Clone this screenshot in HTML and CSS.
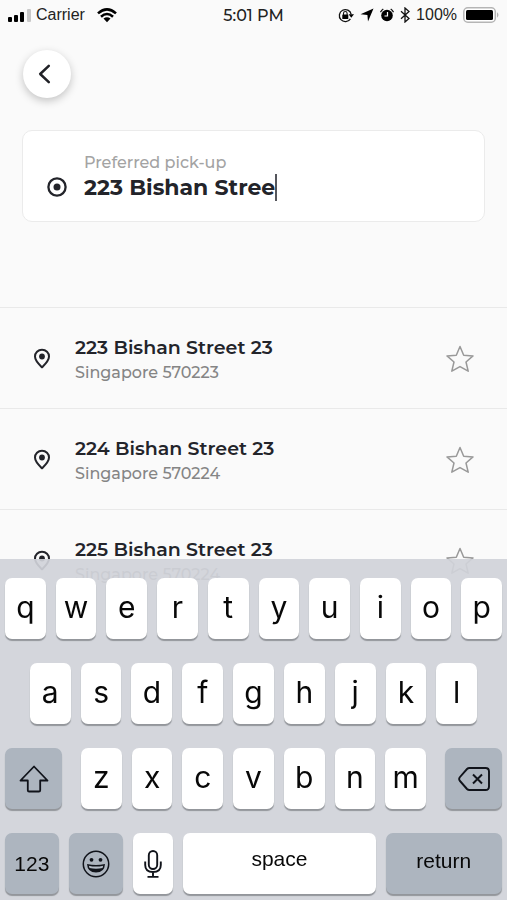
FILE: index.html
```html
<!DOCTYPE html>
<html lang="en">
<head>
<meta charset="utf-8">
<meta name="viewport" content="width=device-width, initial-scale=1">
<title>Preferred pick-up</title>
<link rel="stylesheet" href="styles.css">
</head>
<body>
<svg class="defs" aria-hidden="true">
  <symbol id="pin" viewBox="0 0 18 22">
    <path d="M9 1.800c-4 0-7 3-7 6.800 0 4.200 3.700 7.600 7 10.800 3.300-3.200 7-6.600 7-10.800 0-3.800-3-6.800-7-6.800z" fill="none" stroke="currentColor" stroke-width="2" stroke-linejoin="round"/>
    <circle cx="9" cy="8.500" r="2.900" fill="currentColor"/>
  </symbol>
  <symbol id="star" viewBox="0 0 28 28">
    <path d="M14 1.500 17.700 10.200 27 10.900 20 17 22.200 26.200 14 21.600 5.800 26.200 8 17 1 10.900 10.300 10.200Z" fill="none" stroke="currentColor" stroke-width="1.500" stroke-linejoin="round"/>
  </symbol>
</svg>
<div class="screen">
  <header class="status">
    <div class="status-side">
      <svg width="23" height="14" viewBox="0 0 23 14" aria-hidden="true">
        <rect x="0" y="9" width="4" height="5" rx="1"/><rect x="6" y="7" width="4" height="7" rx="1"/><rect x="12" y="4" width="4" height="10" rx="1"/><rect x="19" y="1" width="4" height="13" rx="1" fill="#c8c8c8"/>
      </svg>
      <span class="carrier">Carrier</span>
      <svg class="wifi" width="20" height="15" viewBox="0 0 20 15" aria-hidden="true">
        <g fill="none" stroke="#000" stroke-width="2.600"><path d="M1 5.400Q10-2.600 19 5.400"/><path d="M4 8.700Q10 3.300 16 8.700"/></g>
        <path d="M6.500 10.600Q10 7.800 13.500 10.600L10 14.200Z"/>
      </svg>
    </div>
    <time class="clock">5:01 PM</time>
    <div class="status-side status-end">
      <svg width="16" height="15" viewBox="0 0 16 15" aria-hidden="true">
        <path d="M12.400 10.800A6 6 0 1 1 13.200 6.300" fill="none" stroke="#111" stroke-width="1.300"/>
        <path d="M10.600 6.300H16L13.300 9.700Z"/><rect x="4.300" y="6.500" width="6" height="4.500" rx=".6"/>
        <path d="M5.500 7V5.300a1.800 1.800 0 0 1 3.600 0V7" fill="none" stroke="#111" stroke-width="1.100"/>
      </svg>
      <svg width="14" height="14" viewBox="0 0 14 14" aria-hidden="true"><path d="M13.500.5 8 13.500 7.400 6.900.5 6.300Z"/></svg>
      <svg width="14" height="14" viewBox="0 0 14 14" aria-hidden="true">
        <circle cx="7" cy="7.500" r="5.800"/><path d="M.5 4.200A7 7 0 0 1 3.300 1M10.700 1A7 7 0 0 1 13.500 4.200" fill="none" stroke="#111" stroke-width="1.300"/>
        <path d="M7.500 4V8H4.500" fill="none" stroke="#fff" stroke-width="1.200"/>
      </svg>
      <svg width="10" height="16" viewBox="0 0 10 16" aria-hidden="true"><path d="M1 4.300 9 11.500 5 15V1L9 4.500 1 11.700" fill="none" stroke="#111" stroke-width="1.300"/></svg>
      <span>100%</span>
      <svg width="36" height="16" viewBox="0 0 36 16" aria-hidden="true">
        <rect x=".8" y=".8" width="31.500" height="14.400" rx="4" fill="#fff" stroke="#b5b5b5" stroke-width="1.500"/>
        <rect x="3" y="3" width="27" height="10" rx="1.500"/><path d="M34 5.300Q37 8 34 10.700Z" fill="#b5b5b5"/>
      </svg>
    </div>
  </header>

  <main>
    <button class="back" type="button" aria-label="Back">
      <svg width="14" height="20" viewBox="0 0 14 20" aria-hidden="true"><path d="M10.800 1.800 2.200 10 10.800 18.200" fill="none" stroke="#202126" stroke-width="2.500" stroke-linecap="round" stroke-linejoin="round"/></svg>
    </button>

    <div class="search">
      <svg width="20" height="20" viewBox="0 0 20 20" aria-hidden="true"><circle cx="10" cy="10" r="8.600" fill="none" stroke="#23242a" stroke-width="2.300"/><circle cx="10" cy="10" r="3.500" fill="#23242a"/></svg>
      <div class="field">
        <label for="pickup">Preferred pick-up</label>
        <div class="entry"><input id="pickup" type="text" size="16" value="223 Bishan Stree"><span class="caret"></span></div>
      </div>
    </div>

    <ul class="results">
      <li>
        <svg class="pin" aria-hidden="true"><use href="#pin"/></svg>
        <div class="place"><strong>223 Bishan Street 23</strong><span>Singapore 570223</span></div>
        <button class="star" type="button" aria-label="Save 223 Bishan Street 23"><svg aria-hidden="true"><use href="#star"/></svg></button>
      </li>
      <li>
        <svg class="pin" aria-hidden="true"><use href="#pin"/></svg>
        <div class="place"><strong>224 Bishan Street 23</strong><span>Singapore 570224</span></div>
        <button class="star" type="button" aria-label="Save 224 Bishan Street 23"><svg aria-hidden="true"><use href="#star"/></svg></button>
      </li>
      <li>
        <svg class="pin" aria-hidden="true"><use href="#pin"/></svg>
        <div class="place"><strong>225 Bishan Street 23</strong><span>Singapore 570224</span></div>
        <button class="star" type="button" aria-label="Save 225 Bishan Street 23"><svg aria-hidden="true"><use href="#star"/></svg></button>
      </li>
    </ul>
  </main>
</div>

<div class="keyboard">
  <div class="keys">
    <button type="button">q</button><button type="button">w</button><button type="button">e</button><button type="button">r</button><button type="button">t</button><button type="button">y</button><button type="button">u</button><button type="button">i</button><button type="button">o</button><button type="button">p</button>
  </div>
  <div class="keys keys-home">
    <button type="button">a</button><button type="button">s</button><button type="button">d</button><button type="button">f</button><button type="button">g</button><button type="button">h</button><button type="button">j</button><button type="button">k</button><button type="button">l</button>
  </div>
  <div class="keys keys-lower">
    <button class="dark" type="button" aria-label="Shift">
      <svg width="30" height="28" viewBox="0 0 30 28" aria-hidden="true"><path d="M15 1.500 28.500 15.500H21.200V25.200Q21.200 26.500 19.900 26.500H10.100Q8.800 26.500 8.800 25.200V15.500H1.500Z" fill="none" stroke="#10131a" stroke-width="1.800" stroke-linejoin="round"/></svg>
    </button>
    <div class="keys letters">
      <button type="button">z</button><button type="button">x</button><button type="button">c</button><button type="button">v</button><button type="button">b</button><button type="button">n</button><button type="button">m</button>
    </div>
    <button class="dark" type="button" aria-label="Delete">
      <svg width="32" height="24" viewBox="0 0 32 24" aria-hidden="true"><path d="M11.500 1H27.500Q31 1 31 4.500V19.500Q31 23 27.500 23H11.500Q10 23 9 22L2 14Q.300 12 2 10L9 2Q10 1 11.500 1Z" fill="none" stroke="#10131a" stroke-width="1.900"/><path d="M15 7.500 24 16.500M24 7.500 15 16.500" fill="none" stroke="#10131a" stroke-width="2"/></svg>
    </button>
  </div>
  <div class="keys keys-bottom">
    <button class="dark text" type="button">123</button>
    <button class="dark" type="button" aria-label="Emoji">
      <svg width="28" height="28" viewBox="0 0 28 28" aria-hidden="true"><circle cx="14" cy="14" r="12.700" fill="none" stroke="#10131a" stroke-width="1.500"/><circle cx="9.500" cy="9.800" r="1.900" fill="#10131a"/><circle cx="18.500" cy="9.800" r="1.900" fill="#10131a"/><path d="M5 14Q14 16 23 14Q22.500 22.600 14 22.600Q5.500 22.600 5 14Z" fill="#10131a"/><path d="M6.800 15.700Q14 17.500 21.200 15.700L20.500 18Q14 19.500 7.500 18Z" fill="#b5bdc7"/></svg>
    </button>
    <button class="mic" type="button" aria-label="Dictate">
      <svg width="18" height="28" viewBox="0 0 18 28" aria-hidden="true"><g fill="none" stroke="#10131a" stroke-width="1.900"><rect x="4.800" y="1" width="8.400" height="18" rx="4.200"/><path d="M1.200 11.500V15Q1.200 22 9 22T16.800 15V11.500M9 22V26.800M3.500 26.900H14.500"/></g></svg>
    </button>
    <button class="space text" type="button">space</button>
    <button class="dark return text" type="button">return</button>
  </div>
</div>
</body>
</html>
```
FILE: styles.css
```css
* {
  box-sizing: border-box;
}

body {
  margin: 0;
  background: #fafafa;
  color: #23242a;
  font-family: Montserrat, Inter, sans-serif;
}

button,
input {
  margin: 0;
  padding: 0;
  border: 0;
  background: none;
  color: inherit;
  font: inherit;
}

svg {
  display: block;
  flex: none;
}

.defs {
  position: absolute;
  width: 0;
  height: 0;
}

.screen {
  height: 100vh;
  overflow: hidden;
}

.status {
  display: flex;
  align-items: center;
  height: 30px;
  padding: 0 8px;
  font-family: "Liberation Sans", Arial, sans-serif;
  font-size: 16px;
  color: #222;
}

.status-side {
  display: flex;
  flex: 1;
  align-items: center;
  gap: 5px;
}

.status-end {
  justify-content: flex-end;
  gap: 6px;
}

.wifi {
  margin-left: 7px;
}

.clock {
  font-family: Montserrat, Inter, sans-serif;
  font-weight: 500;
}

.back {
  display: flex;
  align-items: center;
  justify-content: center;
  width: 48px;
  height: 48px;
  margin: 20px 0 32px 23px;
  border-radius: 50%;
  background: #fff;
  box-shadow: 0 3px 8px rgba(0, 0, 0, 0.22);
}

.back svg {
  margin-right: 4px;
}

.search {
  display: flex;
  align-items: flex-end;
  gap: 17px;
  margin: 0 22px 85px;
  padding: 22px 24px 20px;
  border: 1px solid #ebebeb;
  border-radius: 10px;
  background: #fff;
}

.search > svg {
  margin-bottom: 4px;
}

.field {
  display: flex;
  flex: 1;
  flex-direction: column;
}

.field label {
  font-size: 16px;
  font-weight: 500;
  line-height: 20px;
  color: #a3a3a3;
}

.entry {
  display: flex;
  align-items: center;
}

.entry input {
  field-sizing: content;
  height: 28px;
  font-size: 22px;
  font-weight: 700;
  outline: 0;
}

.caret {
  width: 2px;
  height: 27px;
  background: #55565c;
}

.results {
  margin: 0;
  padding: 0;
  list-style: none;
}

.results li {
  display: flex;
  align-items: center;
  height: 101px;
  padding: 2px 33px 0;
  border-top: 1px solid #e9e9e9;
}

.pin {
  width: 18px;
  height: 22px;
  margin-right: 24px;
}

.place {
  display: flex;
  flex: 1;
  flex-direction: column;
  padding-top: 2px;
}

.place strong {
  font-size: 19px;
  font-weight: 600;
  line-height: 26px;
}

.place span {
  font-size: 16px;
  font-weight: 500;
  line-height: 24px;
  color: #858585;
}

.star {
  color: #999;
}

.star svg {
  width: 28px;
  height: 28px;
}

.keyboard {
  position: fixed;
  right: 0;
  bottom: 0;
  left: 0;
  display: flex;
  flex-direction: column;
  gap: 24px;
  padding: 19px 5px 6px;
  background: rgba(208, 211, 217, 0.92);
  font-family: Inter, sans-serif;
}

.keys {
  display: flex;
  gap: 10px;
}

.keys button {
  display: flex;
  flex: 1 1 0;
  align-items: center;
  justify-content: center;
  min-width: 0;
  height: 61px;
  border-radius: 7px;
  background: #fff;
  box-shadow: 0 2px 1px #93969b;
  color: #080808;
  font-size: 30px;
  line-height: 36px;
}

.keys button:not(.dark, .mic) {
  padding-bottom: 3px;
}

.keys .dark {
  background: #adb5bf;
}

.keys-home {
  padding: 0 5%;
}

.keys-lower {
  gap: 19px;
}

.keys-lower > .dark {
  flex-grow: 57;
}

.letters {
  flex: 345 1 0;
}

.keys-bottom > .dark {
  flex-grow: 54;
}

.keys-bottom > .mic {
  flex-grow: 41;
}

.keys-bottom > .space:not(.dark, .mic) {
  flex-grow: 193;
  padding-bottom: 10px;
}

.keys-bottom > .return {
  flex-grow: 117;
  padding-bottom: 6px;
}

.keys .text {
  font-family: "Liberation Sans", Arial, sans-serif;
  font-size: 21px;
}
```
